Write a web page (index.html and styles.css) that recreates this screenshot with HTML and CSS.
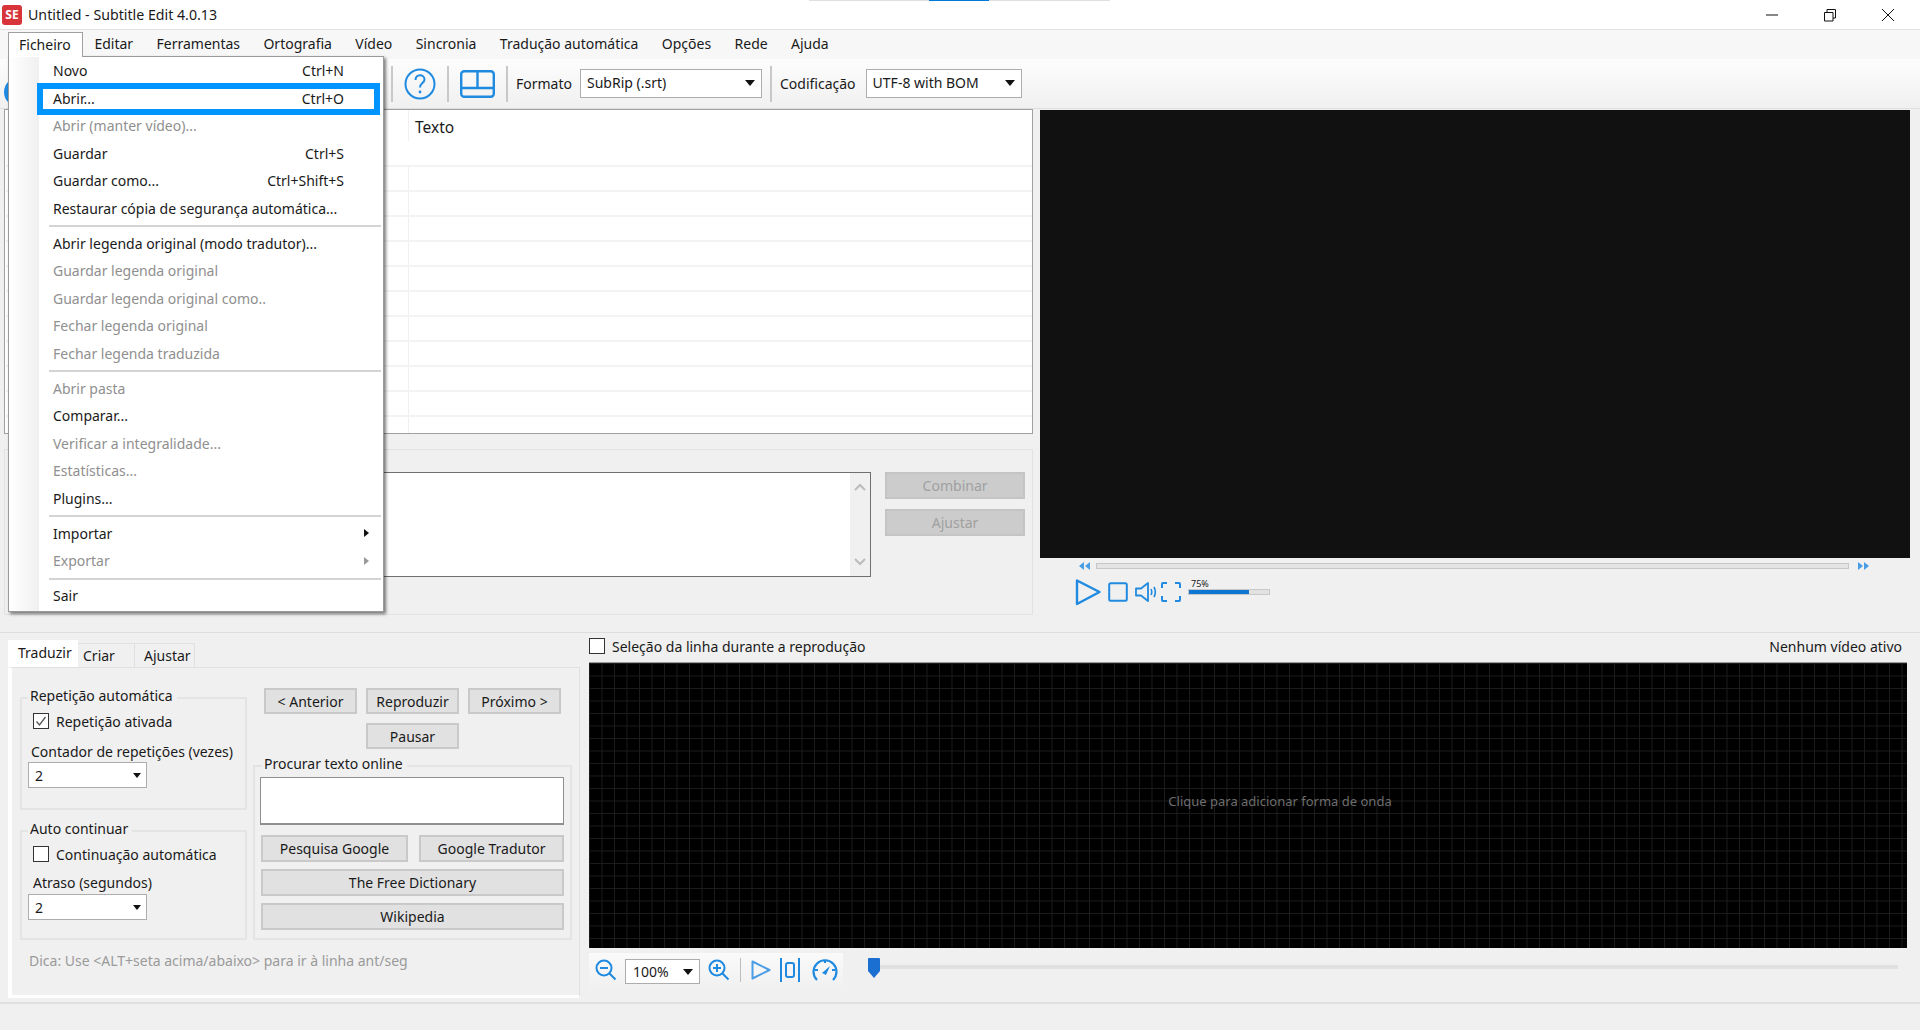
FILE: index.html
```html
<!DOCTYPE html>
<html lang="pt">
  <head>
    <meta charset="UTF-8" />
    <title>Untitled - Subtitle Edit 4.0.13</title>
    <link rel="stylesheet" href="styles.css">
  </head>
  <body>
    <div class="titlebar">
      <span class="app-logo">SE</span>
      <span class="app-title">Untitled - Subtitle Edit 4.0.13</span>
      <div class="top-strip"><div class="top-strip-on"></div></div>
      <div class="win-controls">
        <span class="win-btn"><svg width="14" height="14" viewBox="0 0 14 14"><path d="M1 7h12" stroke="#111" fill="none"/></svg></span>
        <span class="win-btn"><svg width="14" height="14" viewBox="0 0 14 14"><path d="M1.5 4.5h8.500v8.500h-8.500zM4 4.500v-3h8.500v8.500h-2.500" stroke="#111" fill="none"/></svg></span>
        <span class="win-btn"><svg width="14" height="14" viewBox="0 0 14 14"><path d="M1 1l12 12M13 1l-12 12" stroke="#111" fill="none"/></svg></span>
      </div>
    </div>

    <div class="menubar">
      <span class="menubar-item active">Ficheiro</span>
      <span class="menubar-item">Editar</span>
      <span class="menubar-item">Ferramentas</span>
      <span class="menubar-item">Ortografia</span>
      <span class="menubar-item">Vídeo</span>
      <span class="menubar-item">Sincronia</span>
      <span class="menubar-item">Tradução automática</span>
      <span class="menubar-item">Opções</span>
      <span class="menubar-item">Rede</span>
      <span class="menubar-item">Ajuda</span>
    </div>

    <div class="toolbar">
      <svg class="tb-first" width="30" height="30" viewBox="0 0 30 30"><circle cx="15" cy="15" r="13" fill="none" stroke="#1f8ae0" stroke-width="4"/></svg>
      <span class="tb-sep"></span>
      <svg class="tb-icon" width="32" height="32" viewBox="0 0 32 32">
        <circle cx="16" cy="16" r="14.500" fill="none" stroke="#1f8ae0" stroke-width="2"/>
        <path d="M11.500 12c0-3 2-4.800 4.500-4.800s4.500 1.800 4.500 4.200c0 3.500-4.500 3.800-4.500 8" fill="none" stroke="#1f8ae0" stroke-width="2"/>
        <circle cx="16" cy="24" r="1.400" fill="#1f8ae0"/>
      </svg>
      <span class="tb-sep"></span>
      <svg class="tb-icon" width="35" height="28" viewBox="0 0 35 28">
        <rect x="1.200" y="1.200" width="32.600" height="25.600" rx="3" fill="none" stroke="#1f8ae0" stroke-width="2.400"/>
        <path d="M1 18h33M17.500 1v17" fill="none" stroke="#1f8ae0" stroke-width="2.400"/>
      </svg>
      <span class="tb-sep"></span>
      <span class="tb-label">Formato</span>
      <div class="select format-select">SubRip (.srt)</div>
      <span class="tb-sep"></span>
      <span class="tb-label">Codificação</span>
      <div class="select encoding-select">UTF-8 with BOM</div>
    </div>

    <div class="top-row">
      <div class="left-col">
        <div class="subtitle-list">
          <div class="list-head"><span class="list-col-text">Texto</span></div>
          <div class="list-row first"></div>
          <div class="list-row"></div>
          <div class="list-row"></div>
          <div class="list-row"></div>
          <div class="list-row"></div>
          <div class="list-row"></div>
          <div class="list-row"></div>
          <div class="list-row"></div>
          <div class="list-row"></div>
          <div class="list-row"></div>
          <div class="list-row"></div>
        </div>
        <div class="edit-box">
          <div class="edit-text">
            <div class="edit-scroll">
              <svg width="12" height="8" viewBox="0 0 12 8"><path d="M1 7l5-5 5 5" fill="none" stroke="#bcbcbc" stroke-width="2"/></svg>
              <svg width="12" height="8" viewBox="0 0 12 8"><path d="M1 1l5 5 5-5" fill="none" stroke="#bcbcbc" stroke-width="2"/></svg>
            </div>
          </div>
          <div class="edit-actions">
            <button class="btn disabled">Combinar</button>
            <button class="btn disabled">Ajustar</button>
          </div>
        </div>
      </div>

      <div class="video-col">
        <div class="video"></div>
        <div class="timeline">
          <svg width="12" height="8" viewBox="0 0 12 8"><path d="M6 0v8L1 4zM12 0v8L7 4z" fill="#4a9de4"/></svg>
          <div class="timeline-track"></div>
          <svg width="12" height="8" viewBox="0 0 12 8"><path d="M0 0v8l5-4zM6 0v8l5-4z" fill="#4a9de4"/></svg>
        </div>
        <div class="player">
          <svg width="26" height="28" viewBox="0 0 26 28"><path d="M2 2.500L24.500 14 2 26z" fill="none" stroke="#1f8ae0" stroke-width="2.400" stroke-linejoin="round"/></svg>
          <svg width="20" height="20" viewBox="0 0 20 20"><rect x="1.200" y="1.200" width="17.600" height="17.600" rx="1.500" fill="none" stroke="#1f8ae0" stroke-width="2"/></svg>
          <svg width="22" height="20" viewBox="0 0 22 20"><path d="M1 6.500h5L13 1v18l-7-5.500H1z" fill="none" stroke="#1f8ae0" stroke-width="1.800" stroke-linejoin="round"/><path d="M16 7c1 2 1 4 0 6M19 5c1.600 3 1.600 7 0 10" fill="none" stroke="#1f8ae0" stroke-width="1.600"/></svg>
          <svg class="fullscreen-icon" width="20" height="20" viewBox="0 0 20 20"><path d="M1 6V2q0-1 1-1h4M14 1h4q1 0 1 1v4M19 14v4q0 1-1 1h-4M6 19H2q-1 0-1-1v-4" fill="none" stroke="#1f8ae0" stroke-width="2"/></svg>
          <div class="volume">
            <span class="volume-label">75%</span>
            <div class="volume-track"><div class="volume-fill" style="width: 75%"></div></div>
          </div>
        </div>
      </div>
    </div>

    <div class="bottom-row">
      <div class="tabs-col">
        <div class="tabs">
          <span class="tab active">Traduzir</span>
          <span class="tab">Criar</span>
          <span class="tab">Ajustar</span>
        </div>
        <div class="tab-panel">
          <div class="panel-cols">
            <div class="panel-left">
              <div class="group repeat-group">
                <div class="group-title">Repetição automática</div>
                <div class="check-row"><span class="check checked"><svg width="12" height="12" viewBox="0 0 12 12"><path d="M1.500 6.500l3 3.500 6-8" fill="none" stroke="#555" stroke-width="1.300"/></svg></span>Repetição ativada</div>
                <div class="field-label">Contador de repetições (vezes)</div>
                <div class="select small-select">2</div>
              </div>
              <div class="group continue-group">
                <div class="group-title">Auto continuar</div>
                <div class="check-row"><span class="check"></span>Continuação automática</div>
                <div class="field-label">Atraso (segundos)</div>
                <div class="select small-select">2</div>
              </div>
            </div>
            <div class="panel-right">
              <div class="play-buttons">
                <button class="btn">&lt; Anterior</button>
                <button class="btn">Reproduzir</button>
                <button class="btn">Próximo &gt;</button>
                <button class="btn pause-btn">Pausar</button>
              </div>
              <div class="group search-group">
                <div class="group-title">Procurar texto online</div>
                <div class="search-input"></div>
                <div class="search-buttons">
                  <button class="btn">Pesquisa Google</button>
                  <button class="btn">Google Tradutor</button>
                  <button class="btn wide">The Free Dictionary</button>
                  <button class="btn wide">Wikipedia</button>
                </div>
              </div>
            </div>
          </div>
          <div class="hint">Dica: Use &lt;ALT+seta acima/abaixo&gt; para ir à linha ant/seg</div>
        </div>
      </div>

      <div class="wave-col">
        <div class="wave-head">
          <span class="check wave-check"></span>
          <span>Seleção da linha durante a reprodução</span>
          <span class="wave-status">Nenhum vídeo ativo</span>
        </div>
        <div class="waveform">Clique para adicionar forma de onda</div>
        <div class="wave-foot">
          <div class="wave-tools">
            <svg width="22" height="22" viewBox="0 0 22 22"><circle cx="9" cy="9" r="7.500" fill="none" stroke="#1f8ae0" stroke-width="2"/><path d="M5 9h8M14.500 14.500l6 6" fill="none" stroke="#1f8ae0" stroke-width="2"/></svg>
            <div class="select zoom-select">100%</div>
            <svg width="22" height="22" viewBox="0 0 22 22"><circle cx="9" cy="9" r="7.500" fill="none" stroke="#1f8ae0" stroke-width="2"/><path d="M5 9h8M9 5v8M14.500 14.500l6 6" fill="none" stroke="#1f8ae0" stroke-width="2"/></svg>
            <span class="wave-sep"></span>
            <svg width="20" height="20" viewBox="0 0 20 20"><path d="M1.500 1.500L18.500 10 1.500 18.500z" fill="none" stroke="#4a9de4" stroke-width="2" stroke-linejoin="round"/></svg>
            <svg class="bars-icon" width="20" height="24" viewBox="0 0 20 24"><path d="M1 0v24M19 0v24" stroke="#1f8ae0" stroke-width="2" fill="none"/><rect x="6" y="5" width="8" height="14" rx="2" fill="none" stroke="#1f8ae0" stroke-width="2"/></svg>
            <svg class="speed-icon" width="26" height="24" viewBox="0 0 26 24"><path d="M5 22A11.500 11.500 0 1 1 21 22" fill="none" stroke="#1f8ae0" stroke-width="2.200"/><path d="M10 15l8-7-4 9z" fill="#1f8ae0"/><path d="M13 2v3M3 12h3M20 12h3" stroke="#1f8ae0" stroke-width="2" fill="none"/></svg>
          </div>
          <div class="wave-slider">
            <svg class="wave-thumb" width="12" height="20" viewBox="0 0 12 20"><path d="M0 1q0-1 1-1h10q1 0 1 1v12l-6 7-6-7z" fill="#1a6fd0"/></svg>
            <div class="wave-slider-track"></div>
          </div>
        </div>
      </div>
    </div>

    <div class="statusbar"></div>

    <div class="file-menu">
      <div class="menu-row"><span>Novo</span><span>Ctrl+N</span></div>
      <div class="menu-row"><span>Abrir...</span><span>Ctrl+O</span></div>
      <div class="menu-row off"><span>Abrir (manter vídeo)...</span></div>
      <div class="menu-row"><span>Guardar</span><span>Ctrl+S</span></div>
      <div class="menu-row"><span>Guardar como...</span><span>Ctrl+Shift+S</span></div>
      <div class="menu-row"><span>Restaurar cópia de segurança automática...</span></div>
      <div class="menu-sep"></div>
      <div class="menu-row"><span>Abrir legenda original (modo tradutor)...</span></div>
      <div class="menu-row off"><span>Guardar legenda original</span></div>
      <div class="menu-row off"><span>Guardar legenda original como..</span></div>
      <div class="menu-row off"><span>Fechar legenda original</span></div>
      <div class="menu-row off"><span>Fechar legenda traduzida</span></div>
      <div class="menu-sep"></div>
      <div class="menu-row off"><span>Abrir pasta</span></div>
      <div class="menu-row"><span>Comparar...</span></div>
      <div class="menu-row off"><span>Verificar a integralidade...</span></div>
      <div class="menu-row off"><span>Estatísticas...</span></div>
      <div class="menu-row"><span>Plugins...</span></div>
      <div class="menu-sep"></div>
      <div class="menu-row sub"><span>Importar</span><i class="menu-arrow"></i></div>
      <div class="menu-row sub off"><span>Exportar</span><i class="menu-arrow"></i></div>
      <div class="menu-sep"></div>
      <div class="menu-row"><span>Sair</span></div>
      <div class="menu-highlight"></div>
    </div>
  </body>
</html>
```

FILE: styles.css
```css
* {
  box-sizing: border-box;
}
body {
  margin: 0;
  width: 1920px;
  height: 1030px;
  overflow: hidden;
  background-color: #f0f0f0;
  color: #1a1a1a;
  font-family: "Noto Sans", sans-serif;
  font-size: 14px;
  position: relative;
}

/* title bar */
.titlebar {
  height: 30px;
  display: flex;
  align-items: center;
  background-color: #fff;
  border-bottom: 1px solid #e0e0e0;
  padding-left: 2px;
}
.app-logo {
  width: 20px;
  height: 20px;
  border-radius: 3px;
  background-color: #d8353b;
  color: #fff;
  font-size: 12px;
  font-weight: 700;
  line-height: 20px;
  text-align: center;
}
.app-title {
  margin-left: 6px;
  font-size: 14.200px;
}
.top-strip {
  position: absolute;
  left: 809px;
  top: 0;
  width: 301px;
  height: 1px;
  background-color: #e0e0e0;
}
.top-strip-on {
  width: 60px;
  height: 1px;
  margin-left: 120px;
  background-color: #0078d7;
}
.win-controls {
  margin-left: auto;
  margin-right: 3px;
  display: flex;
}
.win-btn {
  width: 58px;
  display: flex;
  justify-content: center;
}

/* menu bar */
.menubar {
  height: 29px;
  display: flex;
  padding: 2px 0 0 8px;
  background-color: #f7f7f7;
}
.menubar-item {
  height: 25px;
  line-height: 24px;
  padding: 0 11.700px;
}
.menubar-item.active {
  position: relative;
  z-index: 6;
  background-color: #fff;
  border: 1px solid #a0a0a0;
  border-bottom: none;
  padding: 0 11px 0 10px;
}

/* toolbar */
.toolbar {
  height: 50px;
  display: flex;
  align-items: center;
  padding-left: 4px;
  background: linear-gradient(#fdfdfd, #f0f0f0);
  border-bottom: 1px solid #e0e0e0;
}
.tb-first {
  margin-top: 16px;
  margin-right: 357px;
}
.tb-sep {
  width: 2px;
  height: 36px;
  background-color: #c8c8c8;
}
.tb-icon {
  margin: 0 11px;
}
.tb-label {
  margin-left: 8px;
  margin-right: 8px;
}
.select {
  position: relative;
  height: 29px;
  line-height: 26px;
  padding-left: 6px;
  background-color: #fff;
  border: 1px solid #adadad;
}
.select::after {
  content: "";
  position: absolute;
  right: 6px;
  top: 10px;
  border-left: 5px solid transparent;
  border-right: 5px solid transparent;
  border-top: 6px solid #111;
}
.format-select {
  width: 182px;
  margin-right: 8px;
}
.encoding-select {
  width: 156px;
  margin-left: 2px;
}

/* subtitle list and text box */
.top-row {
  height: 524px;
  display: flex;
  padding-left: 4px;
  border-bottom: 1px solid #ddd;
}
.left-col {
  width: 1029px;
}
.subtitle-list {
  height: 325px;
  background-color: #fff;
  border: 1px solid #a0a0a0;
  overflow: hidden;
}
.list-head {
  height: 56px;
}
.list-col-text {
  display: block;
  margin-left: 403px;
  padding: 6px 0 0 6px;
  height: 31px;
  font-size: 15.500px;
  border-left: 1px solid #f0f0f0;
}
.list-row {
  height: 25px;
  margin-left: 403px;
  border-left: 1px solid #f0f0f0;
  box-shadow: 0 -1px 0 #f2f2f2;
  position: relative;
}
.list-row::before {
  content: "";
  position: absolute;
  left: -403px;
  right: -700px;
  top: -1px;
  border-top: 2px solid #f3f3f3;
}
.edit-box {
  height: 166px;
  margin-top: 15px;
  border: 1px solid #e2e2e2;
  display: flex;
  padding: 22px 7px 0 27px;
}
.edit-text {
  width: 840px;
  height: 105px;
  background-color: #fff;
  border: 1px solid #6f6f6f;
  display: flex;
  justify-content: flex-end;
}
.edit-scroll {
  width: 20px;
  background-color: #f0f0f0;
  display: flex;
  flex-direction: column;
  justify-content: space-between;
  align-items: center;
  padding: 10px 0;
}
.edit-actions {
  margin-left: 14px;
  width: 140px;
  display: flex;
  flex-direction: column;
  gap: 10px;
}
.btn {
  height: 27px;
  padding: 0;
  background-color: #e1e1e1;
  border: 2px solid #c9c9c9;
  color: #1a1a1a;
  font-family: inherit;
  font-size: 14px;
}
.btn.disabled {
  background-color: #ccc;
  border-color: #c4c4c4;
  color: #a0a0a0;
}

/* video player */
.video-col {
  width: 870px;
  margin-left: 7px;
  padding-top: 1px;
}
.video {
  height: 448px;
  background-color: #111;
}
.timeline {
  display: flex;
  align-items: center;
  height: 6px;
  margin: 5px 0 0 38px;
  gap: 6px;
}
.timeline-track {
  width: 753px;
  height: 6px;
  margin-right: 3px;
  background-color: #e4e4e4;
  border: 1px solid #c8c8c8;
}
.player {
  display: flex;
  align-items: center;
  margin: 9px 0 0 35px;
  gap: 7px;
  height: 28px;
}
.fullscreen-icon {
  margin-left: -3px;
}
.volume {
  position: relative;
  width: 82px;
  height: 28px;
}
.volume-label {
  position: absolute;
  left: 3px;
  top: 0;
  font-size: 9px;
  line-height: 11px;
}
.volume-track {
  position: absolute;
  left: 0;
  top: 11px;
  width: 82px;
  height: 6px;
  background-color: #e2e2e2;
  border: 1px solid #c8c8c8;
}
.volume-fill {
  height: 100%;
  background-color: #0f75d2;
}

/* lower half */
.bottom-row {
  height: 369px;
  display: flex;
}
.tabs-col {
  width: 572px;
  margin: 7px 0 0 8px;
}
.tabs {
  display: flex;
  height: 27px;
  align-items: flex-end;
}
.tab {
  height: 24px;
  line-height: 23px;
  padding: 0 0 0 5px;
  width: 57px;
  border: 1px solid #e0e0e0;
  border-bottom: none;
  border-left: none;
}
.tab:last-child {
  width: 60px;
  padding-left: 9px;
}
.tab.active {
  height: 27px;
  width: 70px;
  line-height: 25px;
  padding-left: 10px;
  background-color: #fff;
  border: none;
}
.tab-panel {
  height: 331px;
  border: 1px solid #e0e0e0;
  border-left: 4px solid #fff;
  border-bottom: 3px solid #fff;
  padding: 19px 0 0 8px;
}
.panel-cols {
  display: flex;
}
.panel-left {
  width: 227px;
  padding-top: 10px;
}
.group {
  border: 2px solid #e4e4e4;
  padding-left: 8px;
}
.group-title {
  width: fit-content;
  margin: -13px 0 0 -2px;
  padding: 0 4px 0 2px;
  height: 20px;
  line-height: 20px;
  background-color: #f0f0f0;
}
.repeat-group {
  height: 113px;
}
.continue-group {
  height: 110px;
  margin-top: 20px;
}
.check-row {
  display: flex;
  align-items: center;
  gap: 7px;
  margin: 7px 0 0 3px;
  height: 16px;
}
.check {
  width: 16px;
  height: 16px;
  flex: none;
  background-color: #fff;
  border: 1px solid #333;
  display: flex;
  align-items: center;
  justify-content: center;
}
.field-label {
  margin-top: 13px;
  margin-left: 1px;
  height: 20px;
  line-height: 20px;
}
.continue-group .field-label {
  margin-top: 11px;
  margin-left: 3px;
}
.small-select {
  width: 119px;
  height: 26px;
  line-height: 25px;
  margin-left: -2px;
}
.continue-group .small-select {
  margin-top: 1px;
}
.small-select::after {
  top: 10px;
  right: 5px;
  border-left-width: 4px;
  border-right-width: 4px;
  border-top-width: 5px;
}
.panel-right {
  width: 319px;
  margin-left: 6px;
  padding-top: 1px;
}
.play-buttons {
  display: grid;
  grid-template-columns: 93px 93px 93px;
  column-gap: 9px;
  row-gap: 9px;
  margin: 0 0 0 11px;
  width: 297px;
}
.play-buttons .btn {
  height: 26px;
}
.pause-btn {
  grid-column: 2;
}
.search-group {
  height: 175px;
  margin-top: 16px;
  padding-left: 5px;
  position: relative;
}
.search-group .group-title {
  margin-left: 2px;
}
.search-input {
  width: 304px;
  height: 48px;
  margin-top: 3px;
  background-color: #fff;
  border: 2px solid #8f8f8f;
  border-width: 1px 1px 2px;
}
.search-buttons {
  display: grid;
  grid-template-columns: 147px 145px;
  column-gap: 11px;
  row-gap: 7px;
  margin: 10px 0 0 1px;
  width: 303px;
}
.btn.wide {
  grid-column: 1 / 3;
}
.hint {
  margin: 11px 0 0 9px;
  color: #9a9a9a;
  line-height: 20px;
}

/* waveform */
.wave-col {
  width: 1318px;
  margin-left: 9px;
  padding-top: 5px;
}
.wave-head {
  display: flex;
  align-items: center;
  height: 16px;
  gap: 7px;
}
.wave-status {
  margin-left: auto;
  margin-right: 5px;
}
.waveform {
  height: 286px;
  margin-top: 8px;
  padding: 0 0 10px 64px;
  background-color: #000;
  background-image: linear-gradient(#1c1c1c 1px, transparent 1px), linear-gradient(90deg, #1c1c1c 1px, transparent 1px);
  background-size: 12.500px 12.500px;
  border-top: 1px solid #999;
  color: #6e6e6e;
  display: flex;
  align-items: center;
  justify-content: center;
  font-size: 13px;
}
.wave-foot {
  display: flex;
  margin-top: 5px;
}
.wave-tools {
  width: 254px;
  height: 37px;
  display: flex;
  align-items: center;
  padding: 0 0 4px 6px;
  gap: 8px;
  background: linear-gradient(#fafafa, #f0f0f0);
}
.zoom-select {
  width: 75px;
  height: 25px;
  line-height: 24px;
  padding-left: 7px;
  margin-top: 3px;
}
.zoom-select::after {
  top: 9px;
}
.wave-sep {
  width: 1px;
  height: 24px;
  background-color: #bdbdbd;
  margin: 0 2px 0 2px;
}
.bars-icon {
  margin-left: 1px;
}
.speed-icon {
  margin-left: 4px;
}
.wave-slider {
  display: flex;
  margin: 5px 0 0 25px;
  height: 20px;
  flex: 1;
  margin-right: 9px;
}
.wave-slider-track {
  flex: 1;
  height: 4px;
  margin-top: 7px;
  background-color: #e0e0e0;
}

.statusbar {
  height: 28px;
  border-top: 2px solid #e0e0e0;
}

/* open file menu */
.file-menu {
  position: absolute;
  left: 8px;
  top: 56px;
  width: 376px;
  height: 556px;
  z-index: 5;
  background: linear-gradient(90deg, #fff 0, #f0f0f0 30px, #fff 30px);
  border: 1px solid #9a9a9a;
  box-shadow: 2px 2px 3px rgba(0, 0, 0, 0.5);
}
.menu-row {
  height: 27.500px;
  display: flex;
  align-items: center;
  justify-content: space-between;
  padding: 0 39px 0 44px;
}
.menu-row.off {
  color: #8f8f8f;
}
.menu-row.sub {
  padding-right: 14px;
}
.menu-arrow {
  border-top: 4px solid transparent;
  border-bottom: 4px solid transparent;
  border-left: 5px solid #111;
}
.menu-row.off .menu-arrow {
  border-left-color: #9a9a9a;
}
.menu-sep {
  height: 2px;
  margin: 3px 2px 2.500px 40px;
  background-color: #d4d4d4;
}
.menu-highlight {
  position: absolute;
  left: 28px;
  top: 26px;
  width: 343px;
  height: 32px;
  border: 6px solid #0094ff;
}
```
